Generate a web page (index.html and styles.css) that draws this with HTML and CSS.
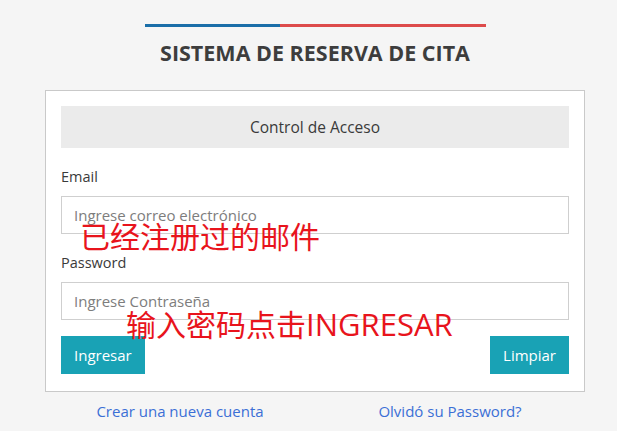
FILE: index.html
```html
<!DOCTYPE html>
<html>
<head>
  <meta charset="utf-8">
  <title>Sistema de Reserva de Cita</title>
  <link rel="stylesheet" href="styles.css">
</head>
<body>
  <div class="page">
    <div class="flag-bar">
      <span class="flag-blue"></span>
      <span class="flag-red"></span>
    </div>
    <!-- Page Title -->
    <h1 class="title">SISTEMA DE RESERVA DE CITA</h1>

    <!-- Login Form -->
    <form class="card">
      <div class="card-header">Control de Acceso</div>
      <label class="label" for="email">Email</label>
      <input class="input" id="email" name="email" placeholder="Ingrese correo electrónico">
      <label class="label" for="pass">Password</label>
      <input class="input" type="password" id="pass" name="pass" placeholder="Ingrese Contraseña">
      <div class="actions">
        <button class="btn" type="submit">Ingresar</button>
        <button class="btn" type="reset">Limpiar</button>
      </div>
      <span class="note note-email">已经注册过的邮件</span>
      <span class="note note-pass">输入密码点击<span class="note-latin">INGRESAR</span></span>
    </form>

    <div class="links">
      <a href="#">Crear una nueva cuenta</a>
      <a href="#">Olvidó su Password?</a>
    </div>
  </div>
</body>
</html>
```

FILE: styles.css
```css
body {
  font-family: 'Open Sans', 'Noto Sans', sans-serif;
  background-color: #f5f5f5;
  margin: 0;
  color: #333;
}
.page {
  width: 540px;
  margin-left: 45px;
  display: flex;
  flex-direction: column;
  align-items: center;
}
.flag-bar {
  display: flex;
  width: 341px;
  height: 3px;
  margin-top: 24px;
}
.flag-blue {
  width: 135px;
  background-color: #1a6ea8;
}
.flag-red {
  flex: 1;
  background-color: #dd4b4b;
}
.title {
  font-size: 21.5px;
  font-weight: 700;
  color: #3d3d3d;
  margin: 11px 0 0;
  line-height: 30px;
}
/* card with the login form */
.card {
  position: relative;
  box-sizing: border-box;
  width: 540px;
  margin-top: 22px;
  background-color: #fff;
  border: 1px solid #c9c9c9;
  padding: 15px 15px 17px;
  display: flex;
  flex-direction: column;
}
.card-header {
  background-color: #ebebeb;
  height: 42px;
  line-height: 42px;
  text-align: center;
  font-size: 15.5px;
  color: #3a3a3a;
}
.label {
  font-size: 14.5px;
  color: #3a3a3a;
  margin-top: 19px;
  line-height: 20px;
}
.input {
  box-sizing: border-box;
  height: 38px;
  margin-top: 9px;
  border: 1px solid #cfcfcf;
  padding: 0 12px;
  font-family: inherit;
  font-size: 15px;
  color: #333;
}
.input::placeholder {
  color: #7d7d7d;
}
.actions {
  display: flex;
  justify-content: space-between;
  margin-top: 16px;
}
.btn {
  height: 38px;
  padding: 0 13px;
  background-color: #19a2b5;
  color: #fff;
  border: none;
  font-family: inherit;
  font-size: 15px;
  cursor: pointer;
}
/* red notes written over the screenshot */
.note {
  position: absolute;
  font-family: 'Noto Sans CJK SC', sans-serif;
  font-size: 30px;
  line-height: 30px;
  color: #e8141c;
  white-space: nowrap;
}
.note-latin {
  font-family: 'Open Sans', sans-serif;
  font-size: 31px;
}
.note-email {
  left: 34px;
  top: 129px;
}
.note-pass {
  left: 80px;
  top: 217px;
}
.links {
  display: flex;
  width: 540px;
  margin-top: 9px;
}
.links a {
  flex: 1;
  text-align: center;
  font-size: 15px;
  color: #3b6fd6;
  text-decoration: none;
}
```
